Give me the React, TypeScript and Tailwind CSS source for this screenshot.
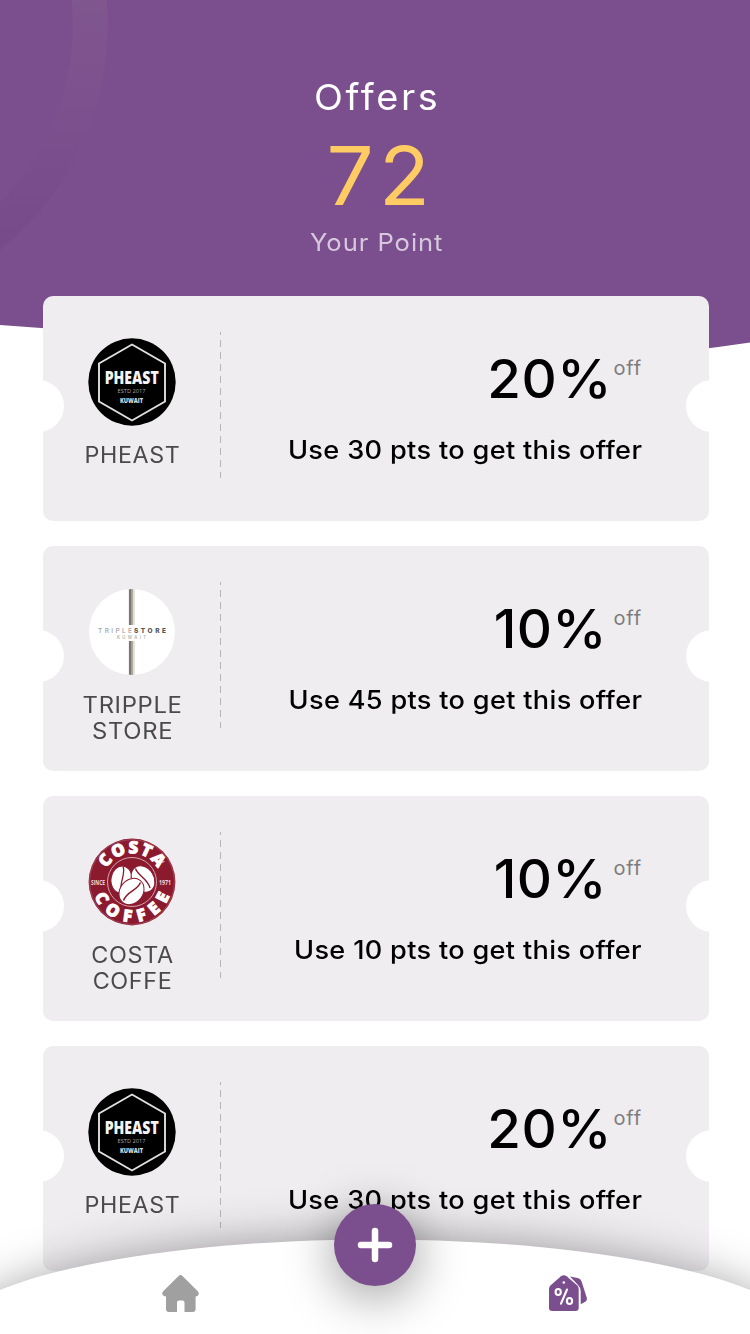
import React from "react";

type Brand = "pheast" | "tripple" | "costa";

interface Offer {
  brand: Brand;
  name: string;
  percent: string;
  points: number;
  percentClass: string;
  captionClass: string;
  labelClass: string;
}

const pheastOffer: Offer = {
  brand: "pheast",
  name: "PHEAST",
  percent: "20%",
  points: 30,
  percentClass: "mr-[2px] tracking-[0.500px]",
  captionClass: "scale-x-[1.086]",
  labelClass: "scale-x-[1.035]",
};

const offers: Offer[] = [
  pheastOffer,
  {
    brand: "tripple",
    name: "TRIPPLE STORE",
    percent: "10%",
    points: 45,
    percentClass: "mr-[7px] tracking-[0.300px]",
    captionClass: "scale-x-[1.084]",
    labelClass: "scale-x-[1.060]",
  },
  {
    brand: "costa",
    name: "COSTA COFFE",
    percent: "10%",
    points: 10,
    percentClass: "mr-[7px] tracking-[0.300px]",
    captionClass: "scale-x-[1.084]",
    labelClass: "scale-x-[1.040]",
  },
  pheastOffer,
];

function PheastLogo() {
  return (
    <svg viewBox="0 0 88 88" className="size-[88px]">
      <circle cx="44" cy="44" r="43.7" fill="#000" />
      <path d="M44 6.500 L77 25.500 V63.500 L44 82.500 L11 63.500 V25.500 Z" fill="none" stroke="#e0e0e0" strokeWidth="1.900" />
      <g fill="#f4f4f4" textAnchor="middle" fontFamily="'Open Sans', 'Liberation Sans', sans-serif">
        <text x="43.700" y="45.700" fontSize="17.500" fontWeight="800" textLength="54" lengthAdjust="spacingAndGlyphs">PHEAST</text>
        <text x="43.500" y="54.500" fontSize="5.200" fill="#a5a5a5" textLength="28" lengthAdjust="spacingAndGlyphs">ESTD 2017</text>
        <text x="43.500" y="65.300" fontSize="7.500" fontWeight="800" fill="#dcdcdc" textLength="23" lengthAdjust="spacingAndGlyphs">KUWAIT</text>
      </g>
    </svg>
  );
}

function TrippleLogo() {
  return (
    <svg viewBox="0 0 88 88" className="size-[88px]">
      <defs>
        <clipPath id="tripple-disc">
          <circle cx="44" cy="44" r="43" />
        </clipPath>
      </defs>
      <circle cx="44" cy="44" r="43" fill="#fff" />
      <g clipPath="url(#tripple-disc)">
        <path d="M42.300 0V37M42.300 53V88" stroke="#777775" strokeWidth="2.800" />
        <path d="M44.400 0V37M44.400 53V88" stroke="#aaa898" strokeWidth="1.500" />
        <path d="M46 0V37M46 53V88" stroke="#e3dfd3" strokeWidth="1.800" />
      </g>
      <g fontFamily="Inter, sans-serif">
        <text x="10" y="44.700" fontSize="6.500" fill="#a5a5a5" textLength="34" fontWeight="500">TRIPLE</text>
        <text x="46" y="44.700" fontSize="6.500" fill="#555" textLength="32" fontWeight="800">STORE</text>
        <text x="29" y="50.700" fontSize="4.200" fill="#b0b0b0" textLength="29" fontWeight="600">KUWAIT</text>
      </g>
    </svg>
  );
}

function CostaLogo() {
  return (
    <svg viewBox="0 0 88 88" className="size-[88px] overflow-visible">
      <defs>
        <path id="costa-top" d="M15.300 44 A28.700 28.700 0 0 1 72.700 44" />
        <path id="costa-bottom" d="M3.800 44 A40.200 40.200 0 0 0 84.200 44" />
      </defs>
      <circle cx="44" cy="44" r="43.400" fill="#8b1a2f" />
      <circle cx="44" cy="44" r="42.400" fill="none" stroke="#b56b78" strokeWidth="0.500" />
      <circle cx="44" cy="44" r="24.500" fill="none" stroke="#dcb3ba" strokeWidth="0.900" />
      <g fill="#fff" textAnchor="middle" fontFamily="'Open Sans', 'Liberation Sans', sans-serif" fontWeight="800">
        <g fontSize="17" stroke="#fff" strokeWidth="0.800">
          <text>
            <textPath href="#costa-top" startOffset="50%" textLength="62">COSTA</textPath>
          </text>
          <text>
            <textPath href="#costa-bottom" startOffset="50%" textLength="98">COFFEE</textPath>
          </text>
        </g>
        <g fontSize="7.500" fontWeight="700" fill="#efd9dd">
          <text x="10" y="46.500" textLength="14" lengthAdjust="spacingAndGlyphs">SINCE</text>
          <text x="77" y="46.500" textLength="12" lengthAdjust="spacingAndGlyphs">1971</text>
        </g>
        <path d="M73.500 24.500L76.500 23.500" stroke="#efd9dd" strokeWidth="0.900" />
      </g>
      <g fill="#fff" stroke="#8b1a2f" strokeWidth="1">
        <ellipse cx="33.500" cy="41.500" rx="10.500" ry="13.500" transform="rotate(8 33.500 41.500)" />
        <path d="M35 28.500C38 36 31.500 43 33 54" fill="none" strokeWidth="1.300" />
        <ellipse cx="55" cy="41" rx="11" ry="14" transform="rotate(-32 55 41)" />
        <path d="M47.500 30.500C50 38 60 41 62 50" fill="none" strokeWidth="1.400" />
        <ellipse cx="43.500" cy="53.500" rx="11.500" ry="14" transform="rotate(38 43.500 53.500)" />
        <path d="M52.500 44.500C49 53 39 53 35.500 62.500" fill="none" strokeWidth="1.500" />
      </g>
    </svg>
  );
}

const logos: Record<Brand, () => React.JSX.Element> = {
  pheast: PheastLogo,
  tripple: TrippleLogo,
  costa: CostaLogo,
};

function OfferCard({ offer }: { offer: Offer }) {
  const Logo = logos[offer.brand];
  return (
    <article className="relative flex h-[225px] shrink-0 overflow-hidden rounded-[10px] bg-[#efedf0]">
      <span className="absolute top-[84px] -left-[31px] size-[52px] rounded-full bg-white" />
      <span className="absolute top-[84px] -right-[29px] size-[52px] rounded-full bg-white" />
      <div className="flex w-[177px] flex-col items-center pt-[42px]">
        <Logo />
        <p className={`mt-[15.500px] w-[115px] pl-[2px] text-center text-[22.500px] leading-[26.500px] tracking-[0.600px] text-[#4a4a4b] ${offer.labelClass}`}>
          {offer.name}
        </p>
      </div>
      <svg className="mt-9 h-[146px] w-px" viewBox="0 0 1 146">
        <path d="M0.500 0V146" stroke="#b6b5b8" strokeDasharray="7 5" strokeDashoffset="4" />
      </svg>
      <div className="flex flex-1 flex-col items-end pt-[53px] pr-[67px] text-black">
        <div className="flex items-start">
          <span className={`origin-right scale-x-[1.030] text-[53px] leading-[60px] font-medium ${offer.percentClass}`}>{offer.percent}</span>
          <span className="mt-[7px] text-[20px] leading-6 font-normal tracking-[0.800px] text-[#7c7c7e]">off</span>
        </div>
        <p className={`mt-[26px] origin-right text-[25px] leading-[30px] font-medium tracking-[0.300px] whitespace-nowrap ${offer.captionClass}`}>
          Use {offer.points} pts to get this offer
        </p>
      </div>
    </article>
  );
}

function HeaderBackdrop() {
  return (
    <svg className="absolute top-0 left-0 h-[380px] w-[750px]" viewBox="0 0 750 380">
      <defs>
        <linearGradient id="ring" gradientUnits="userSpaceOnUse" x1="0" y1="0" x2="0" y2="260">
          <stop offset="0" stopColor="#80568f" />
          <stop offset="0.600" stopColor="#7a4e8c" />
          <stop offset="1" stopColor="#764a88" />
        </linearGradient>
      </defs>
      <path d="M0 0H750V342.500Q560 371 375 361Q190 338 0 325Z" fill="#7b4e8e" />
      <circle cx="-181.500" cy="25" r="271.800" fill="none" stroke="url(#ring)" strokeWidth="35" />
    </svg>
  );
}

function BottomBar() {
  return (
    <nav className="absolute bottom-0 left-0 h-[200px] w-[750px]">
      <svg viewBox="0 0 750 200" className="size-full">
        <defs>
          <filter id="bar-shadow" filterUnits="userSpaceOnUse" x="-200" y="-60" width="1150" height="460">
            <feGaussianBlur stdDeviation="24" />
          </filter>
          <filter id="button-shadow" filterUnits="userSpaceOnUse" x="200" y="-60" width="350" height="350">
            <feGaussianBlur stdDeviation="24" />
          </filter>
        </defs>
        <ellipse cx="375" cy="204.300" rx="415" ry="98.800" fill="#000" fillOpacity="0.380" filter="url(#bar-shadow)" />
        <ellipse cx="375" cy="204.300" rx="430" ry="98.800" fill="#fff" />
        <circle cx="375" cy="121" r="44" fill="#000" fillOpacity="0.350" filter="url(#button-shadow)" />
        <circle cx="375" cy="111" r="41" fill="#7b4e8e" />
        <path d="M361 111H389M375 97V125" stroke="#fff" strokeWidth="6.500" strokeLinecap="round" />
        <path
          d="M178.300 142.200Q180.500 140 182.700 142.200L197.800 157.200Q199.200 158.600 198.600 160.500Q197.800 162.500 195.600 162.500V175Q195.600 178 192.600 178H184.500V168.500Q184.500 166.500 182.500 166.500H179Q177 166.500 177 168.500V178H169Q166 178 166 175V162.500Q163.400 162.500 162.400 160.500Q161.800 158.600 163.200 157.200Z"
          fill="#a0a0a0"
        />
        <path
          d="M570 142.500L577.500 144Q580.500 144.500 581.500 147.300L586.700 163.500Q587.600 166.500 584.800 168L580.700 170.300V157.500Q580.700 153.500 578 151Z"
          fill="#7b4e8e"
        />
        <path
          d="M561 142.300Q563.800 140 566.600 142.300L577 151.200Q578.700 152.800 578.700 155V173.800Q578.700 177 575.500 177H552.200Q549 177 549 173.800V155Q549 152.800 550.700 151.200Z"
          fill="#7b4e8e"
        />
        <circle cx="563.800" cy="148.500" r="1.300" fill="#fff" />
        <g fill="none" stroke="#fff" strokeWidth="2.100" strokeLinecap="round">
          <ellipse cx="558.200" cy="158" rx="2.600" ry="3" />
          <ellipse cx="569.500" cy="167" rx="2.600" ry="3" />
          <path d="M567 155.500L561 169.700" />
        </g>
      </svg>
    </nav>
  );
}

export default function App() {
  return (
    <main className="relative h-[1334px] w-[750px] overflow-hidden bg-white font-[Inter,'Noto_Sans',sans-serif]">
      <HeaderBackdrop />
      <header className="relative flex h-[296px] flex-col items-center pt-[73px]">
        <h1 className="scale-x-[1.050] pl-[4px] text-[36px] leading-[48px] font-normal tracking-[2.500px] text-white">Offers</h1>
        <p className="mt-[8px] scale-x-[1.030] pl-[11px] text-[81px] leading-[94px] font-normal tracking-[5px] text-[#ffcb63]">72</p>
        <p className="mt-[4px] scale-x-[1.065] pl-[3px] text-[24px] leading-8 font-normal tracking-[0.900px] text-[#d6c8dc]">Your Point</p>
      </header>
      <section className="relative flex flex-col gap-[25px] pr-[41px] pl-[43px]">
        {offers.map((offer, index) => (
          <OfferCard key={index} offer={offer} />
        ))}
      </section>
      <BottomBar />
    </main>
  );
}
